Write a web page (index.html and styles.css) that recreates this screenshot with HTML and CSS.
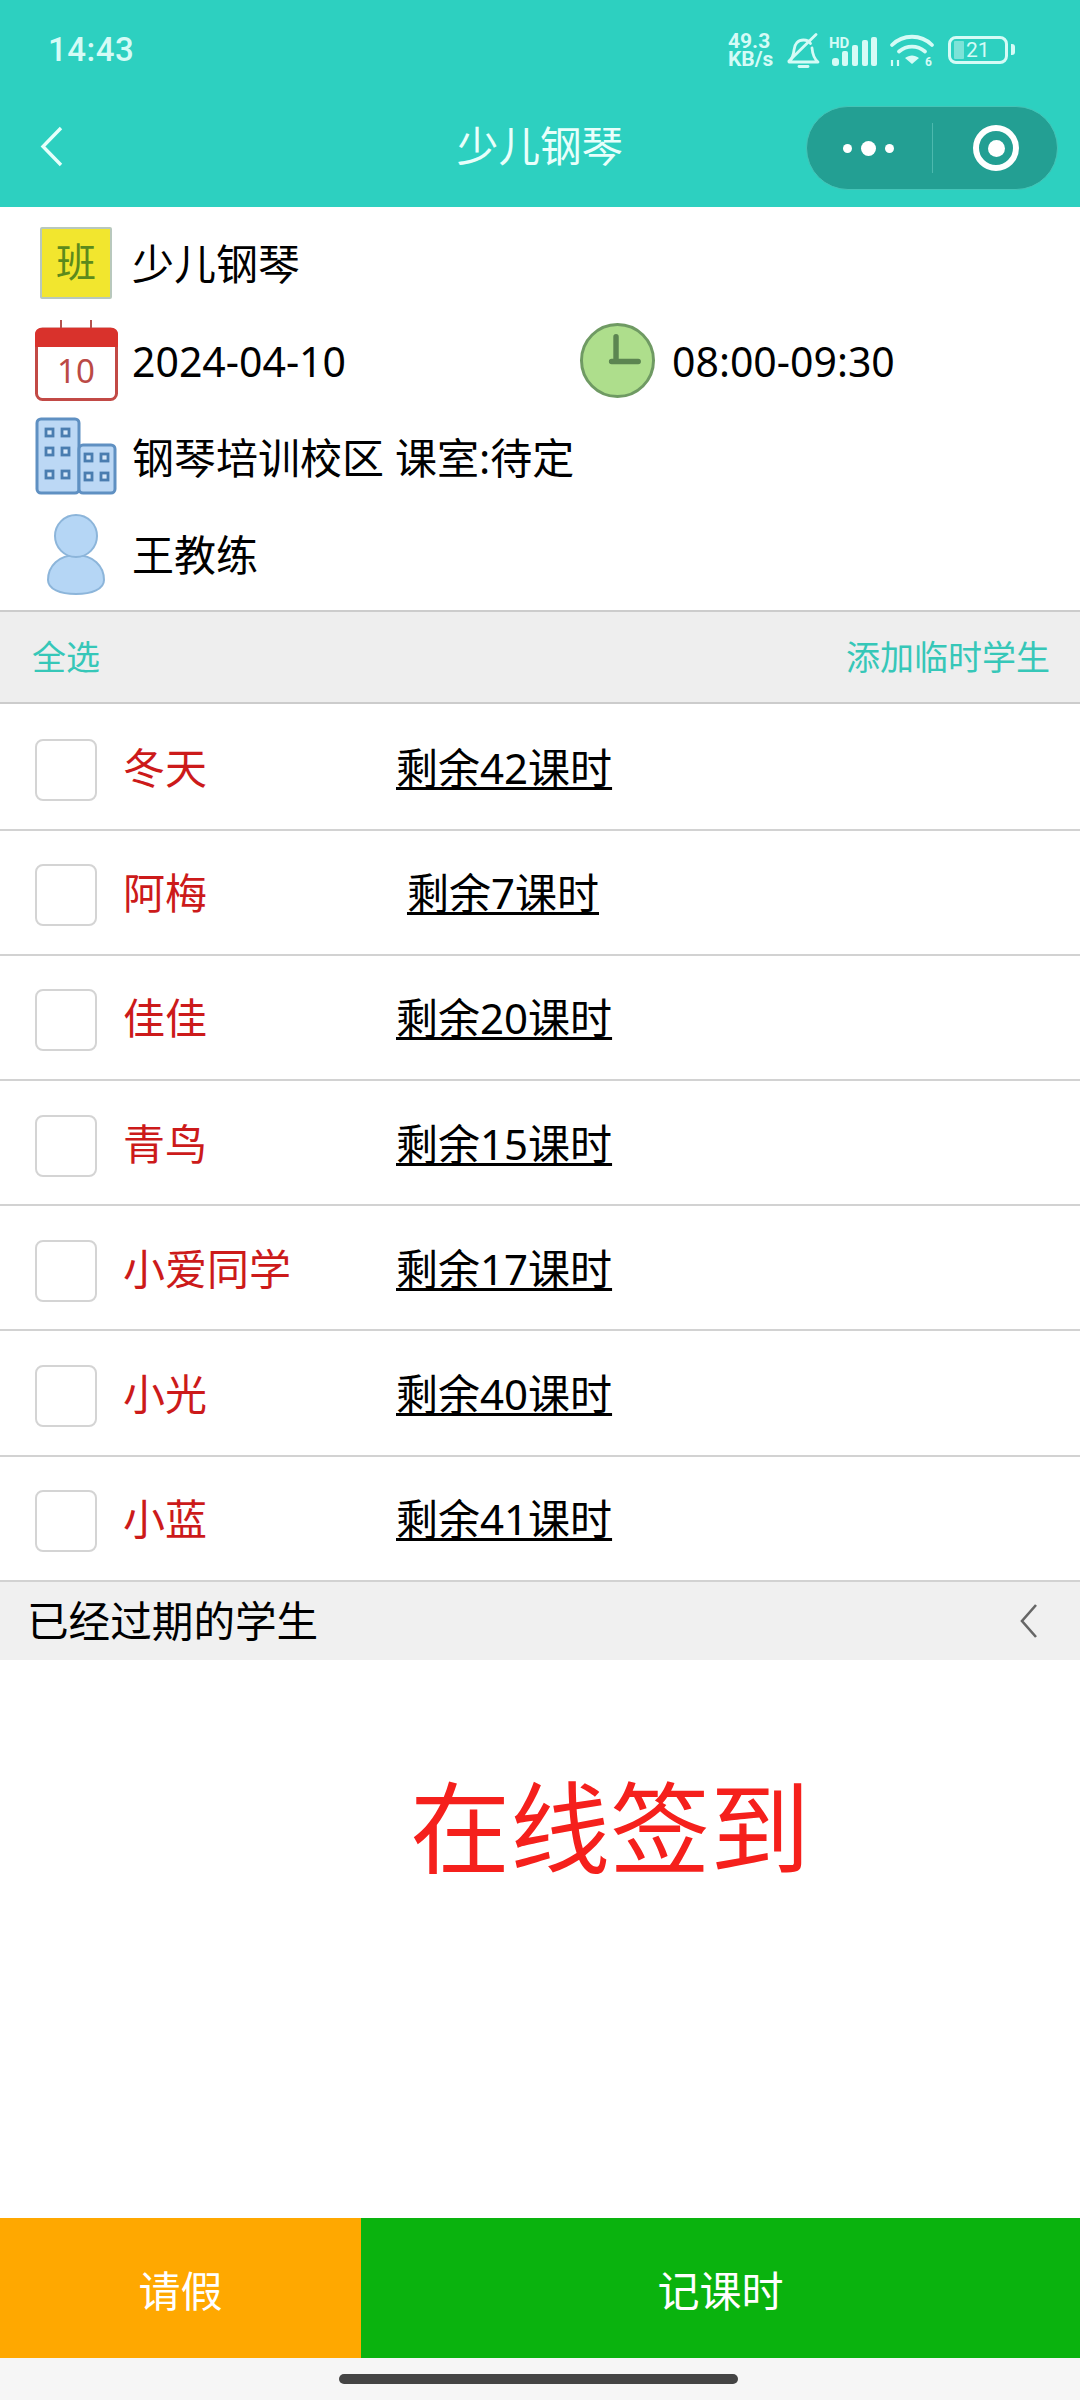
FILE: index.html
```html
<!DOCTYPE html>
<html lang="zh-CN">
<head>
<meta charset="utf-8">
<title>少儿钢琴</title>
<link rel="stylesheet" href="styles.css">
</head>
<body>
<div class="page">
  <header class="top">
    <div class="status">
      <span class="clock">14:43</span>
      <div class="status-right">
        <span class="speed">49.3<br>KB/s</span>
        <svg class="ic-bell" viewBox="0 0 34 36" width="34" height="36"><path d="M3 29c3-3 4.500-7 5-12 .5-6 4-10 9.500-10 3 0 5.500 1 7 3.500M26 15c.5 6 2.500 11 6 14H3" fill="none" stroke="#d5fbf6" stroke-width="2.800" stroke-linecap="round" stroke-linejoin="round"/><path d="M13 33.500h9" stroke="#d5fbf6" stroke-width="2.800" stroke-linecap="round"/><path d="M3 28 L30 1.500" stroke="#d5fbf6" stroke-width="2.800" stroke-linecap="round"/></svg>
        <span class="signal">
          <span class="hd">HD</span>
          <svg viewBox="0 0 48 32" width="48" height="32"><g fill="#d5fbf6"><rect x="2" y="22" width="7" height="8" rx="3"/><rect x="12" y="15" width="6" height="15" rx="2"/><rect x="22" y="9" width="6" height="21" rx="2"/><rect x="32" y="4" width="6" height="26" rx="2"/><rect x="41" y="1" width="6" height="29" rx="2"/></g></svg>
        </span>
        <svg class="ic-wifi" viewBox="0 0 46 38" width="46" height="38"><g fill="none" stroke="#d5fbf6" stroke-width="3.800" stroke-linecap="round"><path d="M3 12C14 1 32 1 43 12"/><path d="M10 18.500c8-6.500 18-6.500 26 0"/></g><path d="M16 25c4.500-3.500 9.500-3.500 14 0l-7 6z" fill="#d5fbf6"/><path d="M3 33v-6M9 33v-6" stroke="#d5fbf6" stroke-width="2.200"/><text x="36" y="33" class="wifi-six">6</text></svg>
        <span class="battery"><span class="battery-fill"></span><span class="battery-num">21</span></span>
        <span class="battery-cap"></span>
      </div>
    </div>
    <div class="nav">
      <svg class="nav-back" viewBox="0 0 26 44" width="26" height="44"><path d="M22 3 L4 21.500 L22 40" fill="none" stroke="#e6fffb" stroke-width="3.400"/></svg>
      <span class="nav-title">少儿钢琴</span>
      <div class="capsule">
        <div class="capsule-dots"><i class="dot"></i><i class="dot dot-big"></i><i class="dot"></i></div>
        <div class="capsule-line"></div>
        <div class="capsule-target"><i class="ring"></i></div>
      </div>
    </div>
  </header>

  <section class="info">
    <div class="info-row">
      <span class="icon-slot"><span class="ban">班</span></span>
      <span class="info-text">少儿钢琴</span>
    </div>
    <div class="info-row">
      <div class="info-half">
        <span class="icon-slot">
          <svg viewBox="0 0 84 84" width="84" height="84">
            <path d="M27 1v10M57 1v10" stroke="#b5534f" stroke-width="2"/>
            <rect x="2.500" y="10" width="80" height="70.500" rx="6" fill="#fff" stroke="#c24a46" stroke-width="3"/>
            <path d="M1 28V15a6 6 0 0 1 6-6h71a6 6 0 0 1 6 6v13z" fill="#d9322c"/>
            <text x="42" y="64" class="cal-num">10</text>
          </svg>
        </span>
        <span class="info-text info-num">2024-04-10</span>
      </div>
      <div class="info-half info-time">
        <svg class="clock-ic" viewBox="0 0 76 76" width="75" height="75"><circle cx="38" cy="38" r="36.500" fill="#aede8c" stroke="#6f9a63" stroke-width="3"/><path d="M36.500 14v25M32 39h27" fill="none" stroke="#5c8551" stroke-width="5.500" stroke-linecap="round" stroke-linejoin="round"/></svg>
        <span class="info-text info-num">08:00-09:30</span>
      </div>
    </div>
    <div class="info-row">
      <span class="icon-slot">
        <svg class="bld" viewBox="0 0 82 78" width="82" height="78">
          <rect x="2" y="2" width="42" height="74" rx="4" fill="#bcd8f5" stroke="#5f90c2" stroke-width="3"/>
          <rect x="44" y="28" width="36" height="48" rx="4" fill="#bcd8f5" stroke="#5f90c2" stroke-width="3"/>
          <g fill="#d6e7f9" stroke="#4a7db0" stroke-width="2.800">
            <rect x="11" y="12" width="7" height="7"/><rect x="27" y="12" width="7" height="7"/>
            <rect x="11" y="31" width="7" height="7"/><rect x="27" y="31" width="7" height="7"/>
            <rect x="11" y="54" width="7" height="7"/><rect x="27" y="54" width="7" height="7"/>
            <rect x="50" y="37" width="7" height="7"/><rect x="66" y="37" width="7" height="7"/>
            <rect x="50" y="56" width="7" height="7"/><rect x="66" y="56" width="7" height="7"/>
          </g>
        </svg>
      </span>
      <span class="info-text">钢琴培训校区 课室:待定</span>
    </div>
    <div class="info-row">
      <span class="icon-slot">
        <svg viewBox="0 0 60 82" width="60" height="82">
          <path d="M30 41C13 41 2 52 2 66c0 9 12 14 28 14s28-5 28-14c0-14-11-25-28-25z" fill="#b5d6f5" stroke="#8cb5da" stroke-width="2"/>
          <circle cx="30" cy="22" r="21" fill="#b5d6f5" stroke="#8cb5da" stroke-width="2"/>
        </svg>
      </span>
      <span class="info-text">王教练</span>
    </div>
  </section>

  <div class="toolbar">
    <span>全选</span>
    <span>添加临时学生</span>
  </div>

  <ul class="students">
    <li class="student"><span class="check"></span><span class="name">冬天</span><span class="hours"><u>剩余42课时</u></span></li>
    <li class="student"><span class="check"></span><span class="name">阿梅</span><span class="hours"><u>剩余7课时</u></span></li>
    <li class="student"><span class="check"></span><span class="name">佳佳</span><span class="hours"><u>剩余20课时</u></span></li>
    <li class="student"><span class="check"></span><span class="name">青鸟</span><span class="hours"><u>剩余15课时</u></span></li>
    <li class="student"><span class="check"></span><span class="name">小爱同学</span><span class="hours"><u>剩余17课时</u></span></li>
    <li class="student"><span class="check"></span><span class="name">小光</span><span class="hours"><u>剩余40课时</u></span></li>
    <li class="student"><span class="check"></span><span class="name">小蓝</span><span class="hours"><u>剩余41课时</u></span></li>
  </ul>

  <div class="expired">
    <span>已经过期的学生</span>
    <svg viewBox="0 0 22 36" width="22" height="36"><path d="M18 2 L4 18 L18 34" fill="none" stroke="#666" stroke-width="2.600"/></svg>
  </div>

  <main class="signin"><span class="signin-text">在线签到</span></main>

  <div class="actions">
    <div class="btn btn-leave">请假</div>
    <div class="btn btn-record">记课时</div>
  </div>
  <div class="home"><i class="home-bar"></i></div>
</div>
</body>
</html>
```
FILE: styles.css
```css
* { box-sizing: border-box; }
html, body { margin: 0; padding: 0; }
body { width: 1080px; height: 2400px; overflow: hidden; background: #fff; font-family: "Noto Sans", "Noto Sans CJK SC", sans-serif; color: #000; }
.page { width: 1080px; height: 2400px; display: flex; flex-direction: column; }

.top { height: 207px; background: #2dd0c0; flex: none; }
.status { height: 100px; padding: 33px 65px 0 48px; display: flex; justify-content: space-between; }
.clock { font: 500 33px/34px Roboto, sans-serif; color: #d5fbf6; letter-spacing: .5px; }
.status-right { display: flex; align-items: flex-start; }
.speed { display: block; font: 700 21px/17.500px Roboto, sans-serif; color: #d5fbf6; width: 48px; margin-right: 10px; white-space: nowrap; }
.ic-bell { margin-right: 10px; }
.signal { position: relative; width: 48px; height: 32px; margin-right: 11px; margin-top: 3px; }
.hd { position: absolute; left: -1px; top: 0; font: 700 15px/15px Roboto, sans-serif; color: #d5fbf6; }
.signal svg { display: block; }
.ic-wifi { margin-right: 13px; }
.wifi-six { font: 700 12px Roboto, sans-serif; fill: #d5fbf6; }
.battery { width: 60px; height: 28px; margin-top: 3px; border: 3px solid #d5fbf6; border-radius: 8px; position: relative; display: flex; align-items: center; padding-left: 3px; }
.battery-fill { width: 10px; height: 18px; background: #7de3d8; border-radius: 1px; }
.battery-num { font: 400 21px/22px Roboto, sans-serif; color: #d5fbf6; margin-left: 2px; }
.battery-cap { width: 4px; height: 11px; margin: 11px 0 0 3px; background: #d5fbf6; border-radius: 0 3px 3px 0; }

.nav { height: 107px; position: relative; display: flex; align-items: center; justify-content: center; }
.nav-back { position: absolute; left: 39px; top: 25px; }
.nav-title { font-size: 41.600px; line-height: 48px; color: #e8fffb; position: relative; top: -8px; }
.capsule { position: absolute; left: 806px; top: 6px; width: 252px; height: 84px; border-radius: 42px; background: #239f93; border: 1px solid #45c4b7; display: flex; align-items: center; }
.capsule-dots { width: 125px; display: flex; align-items: center; justify-content: center; gap: 9px; padding-right: 2px; }
.dot { width: 9px; height: 9px; border-radius: 50%; background: #fff; display: block; }
.dot-big { width: 15px; height: 15px; }
.capsule-line { width: 1px; height: 50px; background: #4db9ae; }
.capsule-target { flex: 1; display: flex; align-items: center; justify-content: center; padding-left: 2px; }
.ring { width: 46px; height: 46px; border-radius: 50%; border: 6px solid #fff; display: flex; align-items: center; justify-content: center; }
.ring::after { content: ""; width: 17px; height: 17px; background: #fff; border-radius: 50%; }

.info { height: 403px; flex: none; padding-top: 8px; }
.info-row { height: 97px; display: flex; align-items: center; padding-left: 34px; }
.icon-slot { width: 84px; height: 84px; display: flex; align-items: center; justify-content: center; flex: none; }
.info-text { font-size: 42px; line-height: 50px; margin-left: 14px; white-space: nowrap; }
.info-num { font-size: 41px; }
.info-half { width: 546px; flex: none; display: flex; align-items: center; }
.info-time { width: auto; }
.clock-ic { flex: none; margin-right: 2px; }
.info-time .info-text { margin-left: 15px; }
.bld { margin-bottom: 4px; }
.ban { width: 72px; height: 72px; margin-bottom: 2px; background: #f2e62e; border: 2px solid #b8c8bd; border-radius: 2px; color: #5c8a1c; font-size: 40px; line-height: 66px; text-align: center; display: block; }
.cal-num { font: 400 33px "Noto Sans", sans-serif; fill: #bb4a45; text-anchor: middle; }

.toolbar { height: 94px; flex: none; background: #eee; border-top: 2px solid #ccc; border-bottom: 2px solid #ccc; padding: 0 30px 0 32px; display: flex; align-items: center; justify-content: space-between; color: #36c7b8; font-size: 34px; line-height: 40px; }

.students { list-style: none; margin: 0; padding: 1.500px 0 0; flex: none; }
.student { height: 125.200px; border-bottom: 2px solid #d2d2d2; display: grid; grid-template-columns: 124px 196px 1fr; align-items: center; padding-left: 35px; position: relative; font-size: 42px; }
.check { width: 62px; height: 62px; margin-top: 6px; border: 2px solid #d4d4d4; border-radius: 8px; background: #fff; display: block; }
.name { color: #cc1a1a; line-height: 50px; white-space: nowrap; position: relative; left: -36px; top: 1px; }
.hours { width: 214px; text-align: center; line-height: 50px; white-space: nowrap; position: relative; left: 41px; top: 1px; }
.hours u { text-decoration-thickness: 3px; text-underline-offset: 3px; }

.expired { height: 78px; flex: none; background: #f0f0f0; display: flex; align-items: center; justify-content: space-between; padding: 0 40px 0 27px; font-size: 41.600px; line-height: 50px; }

.signin { flex: 1; display: flex; justify-content: center; align-items: center; padding: 0 0 224px 0; }
.signin-text { color: #f5201c; font-size: 100px; line-height: 120px; position: relative; left: 70px; }

.actions { height: 140px; flex: none; display: flex; color: #fff; font-size: 42px; }
.btn { display: flex; align-items: center; justify-content: center; }
.btn-leave { width: 361px; background: #ffa800; }
.btn-record { flex: 1; background: #0ab30e; }
.home { height: 42px; flex: none; background: #f6f6f6; display: flex; justify-content: center; padding: 16px 3px 0 0; }
.home-bar { display: block; width: 399px; height: 10px; border-radius: 5px; background: #444; }
```
